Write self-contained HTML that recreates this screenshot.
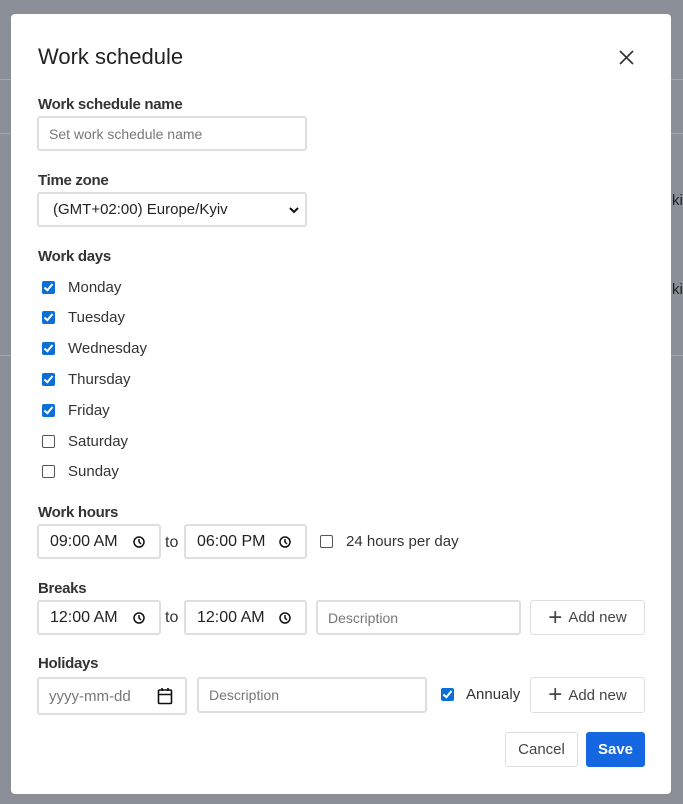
<!DOCTYPE html><html><head><style>
body{margin:0;width:683px;height:804px;background:#8b8f97;position:relative;overflow:hidden;font-family:"Liberation Sans",Arial,sans-serif;color:#212529}
.ln{position:absolute;left:0;width:683px;height:1px;background:#a3a6ad}
.m{position:absolute;left:11px;top:14px;width:660px;height:780px;background:#fff;border-radius:4px}
.a{position:absolute}
.lbl{position:absolute;font-size:15px;font-weight:bold;color:#333;letter-spacing:-0.3px}
.in{position:absolute;box-sizing:border-box;border:2px solid #dcdee2;border-radius:3px;background:#fff;font-size:15px;color:#222;display:flex;align-items:center;padding-left:10px}
.ph{color:#777}
.cb{position:absolute;width:13px;height:13px;box-sizing:border-box;border-radius:2px}
.on{background:#0b6fd6}
.on::after{content:"";position:absolute;left:4px;top:1px;width:3px;height:7px;border:solid #fff;border-width:0 2px 2px 0;transform:rotate(40deg)}
.off{border:1px solid #555;background:#fff}
.t{position:absolute;font-size:15px;color:#333}
.btn{position:absolute;box-sizing:border-box;border:1px solid #dcdee2;border-radius:3px;font-size:15px;color:#444;display:flex;align-items:center;justify-content:center;font-weight:bold}
.tm{font-size:16px;padding-left:11px}
</style></head><body>
<div class="ln" style="top:79px"></div><div class="ln" style="top:133px"></div><div class="ln" style="top:355px"></div>
<div class="a" style="left:672px;top:192px;font-size:15px;color:#222">ki</div>
<div class="a" style="left:672px;top:281px;font-size:15px;color:#222">ki</div>
<div class="m"></div>
<div class="a" style="left:38px;top:44px;font-size:22px;color:#222">Work schedule</div>
<svg class="a" style="left:619px;top:50px" width="15" height="15" viewBox="0 0 15 15"><path d="M1 1L14 14M14 1L1 14" stroke="#333" stroke-width="1.6"/></svg>
<div class="lbl" style="left:38px;top:96px">Work schedule name</div>
<div class="in" style="left:37px;top:116px;width:270px;height:35px"><span class="ph" style="font-size:14px">Set work schedule name</span></div>
<div class="lbl" style="left:38px;top:172px">Time zone</div>
<div class="in" style="left:37px;top:192px;width:270px;height:35px;padding-left:14px">(GMT+02:00) Europe/Kyiv
<svg style="position:absolute;right:6px;top:12px" width="10" height="8" viewBox="0 0 10 8"><path d="M1 2L5 6L9 2" stroke="#111" stroke-width="2" fill="none"/></svg></div>
<div class="lbl" style="left:38px;top:248px">Work days</div>
<div class="cb on" style="left:42px;top:281px"></div><div class="t" style="left:68px;top:279px">Monday</div>
<div class="cb on" style="left:42px;top:311px"></div><div class="t" style="left:68px;top:309px">Tuesday</div>
<div class="cb on" style="left:42px;top:342px"></div><div class="t" style="left:68px;top:340px">Wednesday</div>
<div class="cb on" style="left:42px;top:373px"></div><div class="t" style="left:68px;top:371px">Thursday</div>
<div class="cb on" style="left:42px;top:404px"></div><div class="t" style="left:68px;top:402px">Friday</div>
<div class="cb off" style="left:42px;top:435px"></div><div class="t" style="left:68px;top:433px">Saturday</div>
<div class="cb off" style="left:42px;top:465px"></div><div class="t" style="left:68px;top:463px">Sunday</div>
<div class="lbl" style="left:38px;top:504px">Work hours</div>
<div class="in tm" style="left:37px;top:524px;width:124px;height:35px">09:00 AM<svg style="position:absolute;right:14px;top:10px" width="12" height="12" viewBox="0 0 12 12"><circle cx="6" cy="6" r="5" stroke="#111" stroke-width="1.5" fill="none"/><path d="M6 3V6L8 8" stroke="#111" stroke-width="1.5" fill="none"/></svg></div>
<div class="t" style="left:165px;top:534px;font-size:16px">to</div>
<div class="in tm" style="left:184px;top:524px;width:123px;height:35px">06:00 PM<svg style="position:absolute;right:14px;top:10px" width="12" height="12" viewBox="0 0 12 12"><circle cx="6" cy="6" r="5" stroke="#111" stroke-width="1.5" fill="none"/><path d="M6 3V6L8 8" stroke="#111" stroke-width="1.5" fill="none"/></svg></div>
<div class="cb off" style="left:320px;top:535px"></div><div class="t" style="left:346px;top:533px">24 hours per day</div>
<div class="lbl" style="left:38px;top:580px">Breaks</div>
<div class="in tm" style="left:37px;top:600px;width:124px;height:35px">12:00 AM<svg style="position:absolute;right:14px;top:10px" width="12" height="12" viewBox="0 0 12 12"><circle cx="6" cy="6" r="5" stroke="#111" stroke-width="1.5" fill="none"/><path d="M6 3V6L8 8" stroke="#111" stroke-width="1.5" fill="none"/></svg></div>
<div class="t" style="left:165px;top:609px;font-size:16px">to</div>
<div class="in tm" style="left:184px;top:600px;width:123px;height:35px">12:00 AM<svg style="position:absolute;right:14px;top:10px" width="12" height="12" viewBox="0 0 12 12"><circle cx="6" cy="6" r="5" stroke="#111" stroke-width="1.5" fill="none"/><path d="M6 3V6L8 8" stroke="#111" stroke-width="1.5" fill="none"/></svg></div>
<div class="in" style="left:316px;top:600px;width:205px;height:35px"><span class="ph" style="font-size:14px">Description</span></div>
<div class="btn" style="left:530px;top:600px;width:115px;height:35px;font-weight:normal"><span style="font-size:24px;font-weight:300;margin-right:6px;line-height:1">+</span>Add new</div>
<div class="lbl" style="left:38px;top:655px">Holidays</div>
<div class="in" style="left:37px;top:677px;width:150px;height:38px"><span class="ph" style="font-size:15px">yyyy-mm-dd</span><svg style="position:absolute;right:12px;top:8px" width="16" height="18" viewBox="0 0 16 18"><rect x="1.5" y="3" width="13" height="13.5" rx="1" stroke="#111" stroke-width="1.6" fill="none"/><path d="M1.5 7.5H14.5M5 1V4M11 1V4" stroke="#111" stroke-width="1.6"/></svg></div>
<div class="in" style="left:197px;top:677px;width:230px;height:36px"><span class="ph" style="font-size:14px">Description</span></div>
<div class="cb on" style="left:441px;top:688px"></div><div class="t" style="left:466px;top:686px">Annualy</div>
<div class="btn" style="left:530px;top:677px;width:115px;height:36px;font-weight:normal"><span style="font-size:24px;font-weight:300;margin-right:6px;line-height:1">+</span>Add new</div>
<div class="btn" style="left:505px;top:732px;width:73px;height:35px;font-weight:normal">Cancel</div>
<div class="btn" style="left:586px;top:732px;width:59px;height:35px;background:#1467e0;border-color:#1467e0;color:#fff">Save</div>
</body></html>
